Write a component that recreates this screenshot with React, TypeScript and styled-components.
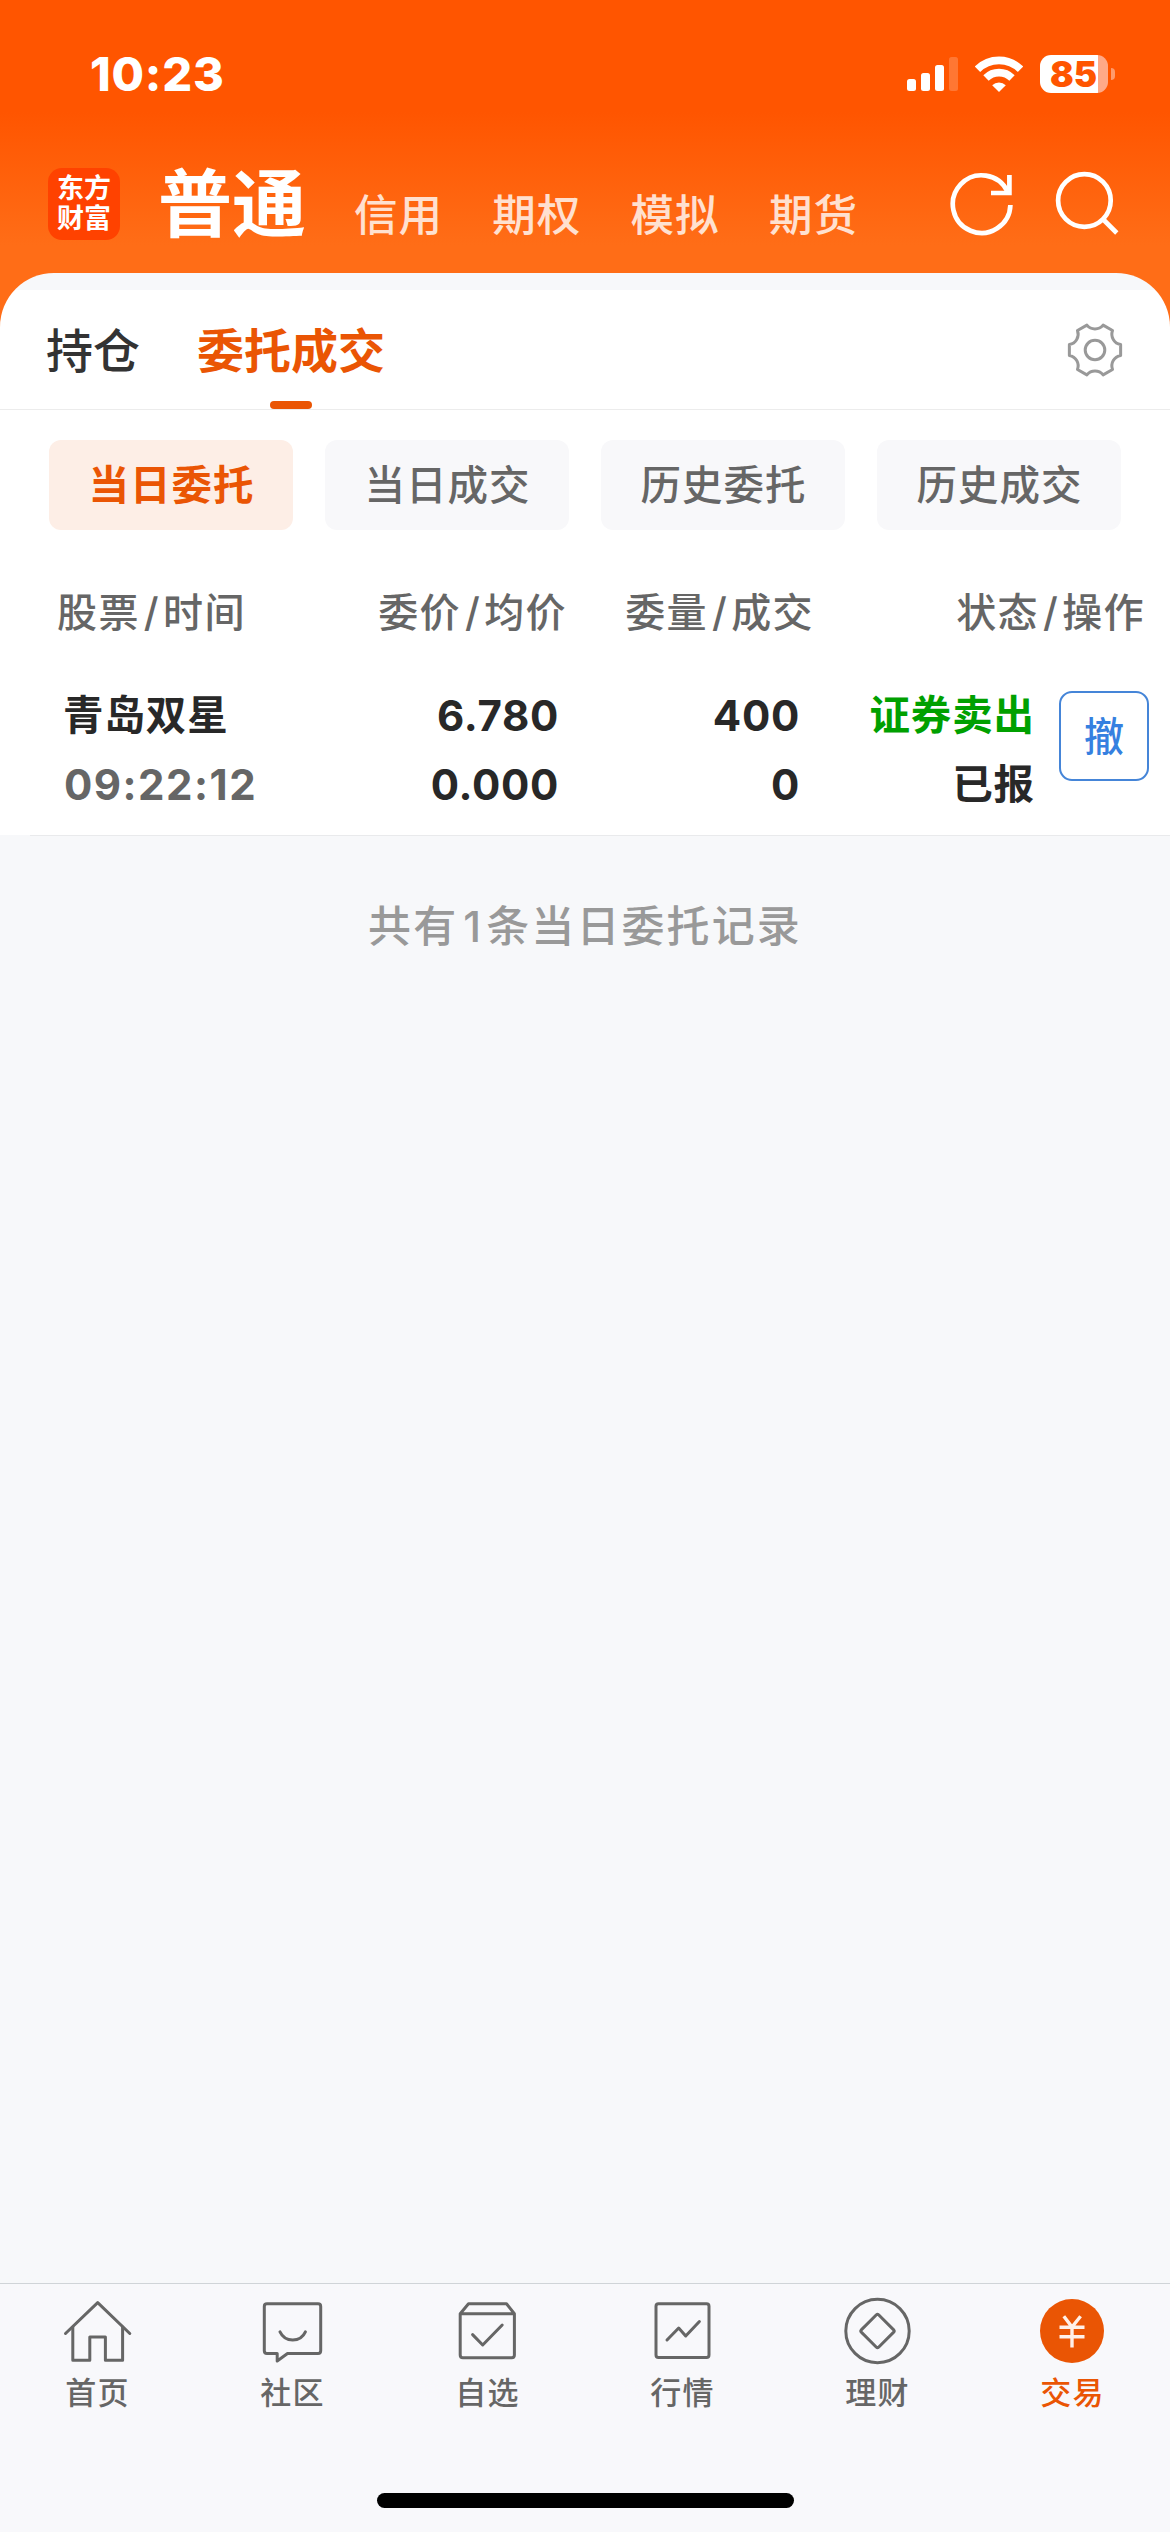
import React from "react";
import styled, { createGlobalStyle } from "styled-components";

const GlobalStyle = createGlobalStyle`
  * { box-sizing: border-box; }
  html, body { margin: 0; padding: 0; }
  body {
    width: 1170px;
    background: #f7f8fa;
    font-family: Inter, "Noto Sans CJK SC", sans-serif;
    -webkit-font-smoothing: antialiased;
  }
  button { font-family: inherit; border: 0; background: none; padding: 0; }
`;

const Screen = styled.div`
  width: 1170px;
  height: 2532px;
  display: flex;
  flex-direction: column;
  overflow: hidden;
  background: #f7f8fa;
`;

/* ---------- header ---------- */

const Header = styled.header`
  flex: none;
  height: 273px;
  background: linear-gradient(180deg, #ff5500 0, #ff5500 112px, #ff6d17 245px, #ff6d17 100%);
`;

const StatusBar = styled.div`
  height: 148px;
  padding: 0 55px 0 90px;
  display: flex;
  justify-content: space-between;
`;

const Clock = styled.span`
  margin-top: 46px;
  line-height: 56px;
  font-size: 47px;
  font-weight: 800;
  letter-spacing: 0.8px;
  color: #fff;
`;

const StatusIcons = styled.div`
  height: 38px;
  margin-top: 55px;
  display: flex;
  align-items: center;
  & > :nth-child(2) { margin-left: 17px; }
`;

const Battery = styled.div`
  width: 68px;
  height: 38px;
  margin-left: 17px;
  border-radius: 11px;
  background: linear-gradient(90deg, #fff 58px, #ffa987 58px);
  color: #ff5500;
  font-size: 35px;
  font-weight: 900;
  line-height: 38px;
  text-indent: 10px;
`;

const BatteryCap = styled.div`
  width: 4px;
  height: 12px;
  margin-left: 3px;
  border-radius: 0 4px 4px 0;
  background: #ff9a6b;
`;

const AccountBar = styled.div`
  height: 125px;
  padding: 0 51px 0 48px;
  display: flex;
`;

const Logo = styled.div`
  width: 72px;
  height: 72px;
  margin-top: 20px;
  padding-top: 6px;
  border-radius: 14px;
  background: #ff4200;
  color: #fff;
  font-size: 27px;
  font-weight: 700;
  line-height: 30px;
  text-align: center;
`;

const AccountTabs = styled.nav`
  flex: 1;
  display: flex;
  align-items: baseline;
  height: 112px;
  padding-left: 38px;
`;

const AccountTab = styled.button<{ $active?: boolean }>`
  width: ${(p) => (p.$active ? "196px" : "138.3px")};
  text-align: left;
  color: #fff;
  opacity: ${(p) => (p.$active ? 1 : 0.8)};
  font-size: ${(p) => (p.$active ? "74px" : "43.5px")};
  font-weight: ${(p) => (p.$active ? 700 : 500)};
  letter-spacing: ${(p) => (p.$active ? "0" : "1px")};
  line-height: 112px;
  white-space: nowrap;
`;

const HeaderActions = styled.div`
  display: flex;
  gap: 38px;
  margin-top: 20px;
`;

/* ---------- card ---------- */

const CardBackdrop = styled.div`
  flex: none;
  background: linear-gradient(180deg, #ff6d17 90px, #fff 90px);
`;

const Card = styled.section`
  border-radius: 54px 54px 0 0;
  background: linear-gradient(180deg, #f7f8fa 17px, #fff 17px);
  padding-top: 17px;
`;

const PageTabs = styled.div`
  height: 120px;
  padding: 0 47px 0 46px;
  border-bottom: 1px solid #ececec;
  display: flex;
`;

const PageTab = styled.button<{ $active?: boolean }>`
  height: 119px;
  margin-right: 57px;
  display: flex;
  flex-direction: column;
  align-items: center;
  justify-content: space-between;
  color: ${(p) => (p.$active ? "#ea5504" : "#333")};
  font-size: 47px;
  font-weight: ${(p) => (p.$active ? 700 : 500)};
  line-height: 60px;
  padding-top: 31px;
  &::after {
    content: "";
    width: 42px;
    height: 8px;
    border-radius: 4px;
    background: ${(p) => (p.$active ? "#ea5504" : "transparent")};
  }
`;

const SettingsButton = styled.button`
  margin: 32px 0 0 auto;
  width: 56px;
  height: 56px;
`;

const Filters = styled.div`
  height: 120px;
  padding: 30px 49px 0 49px;
  display: flex;
  justify-content: space-between;
`;

const Filter = styled.button<{ $active?: boolean }>`
  width: 244px;
  height: 90px;
  padding: 1px 0 0 1px;
  border-radius: 12px;
  background: ${(p) => (p.$active ? "#fdeee6" : "#f8f8fa")};
  color: ${(p) => (p.$active ? "#ea5504" : "#666")};
  font-size: 40.5px;
  font-weight: ${(p) => (p.$active ? 700 : 500)};
  letter-spacing: 1px;
  line-height: 90px;
`;

const TableHead = styled.div`
  height: 143px;
  padding: 53px 25px 0 57px;
  display: grid;
  grid-template-columns: 200px 310px 247px 331px;
  color: #666;
  font-size: 40px;
  font-weight: 500;
  letter-spacing: 1.4px;
  line-height: 60px;
  text-align: right;
  & > :first-child { text-align: left; }
`;

const Slash = styled.span`
  margin: 0 3px 0 4px;
`;

const OrderRow = styled.div`
  height: 162px;
  padding: 13px 21px 0 63px;
  display: grid;
  grid-template-columns: 200px 296px 241px 235px 1fr;
  color: #282828;
  font-weight: 700;
`;

const Cell = styled.div<{ $left?: boolean }>`
  display: flex;
  flex-direction: column;
  align-items: ${(p) => (p.$left ? "flex-start" : "flex-end")};
`;

const Line = styled.span<{ $tone?: string; $number?: boolean }>`
  height: 69px;
  line-height: 60px;
  font-size: ${(p) => (p.$number ? "42px" : "40.5px")};
  font-weight: ${(p) => (p.$number ? 750 : 700)};
  letter-spacing: ${(p) => (p.$number ? "0.7px" : "0.9px")};
  color: ${(p) => p.$tone ?? "inherit"};
  white-space: nowrap;
`;

const TimeLine = styled(Line)`
  padding-left: 1px;
  letter-spacing: 1.5px;
`;

const CancelButton = styled.button`
  justify-self: end;
  width: 90px;
  height: 90px;
  margin-top: 5px;
  border: 2px solid #4585d8;
  border-radius: 13px;
  color: #3580e0;
  font-size: 40px;
  font-weight: 500;
  line-height: 85px;
`;

const RowDivider = styled.div`
  height: 1px;
  margin-left: 30px;
  background: #e9eaec;
`;

const Summary = styled.p`
  flex: 1;
  margin: 0;
  padding-top: 60px;
  text-align: center;
  color: #999;
  font-size: 43px;
  font-weight: 500;
  letter-spacing: 2.1px;
  line-height: 60px;
`;

const SummaryCount = styled.span`
  margin: 0 3px 0 5px;
`;

/* ---------- bottom navigation ---------- */

const BottomNav = styled.nav`
  flex: none;
  height: 249px;
  border-top: 1px solid #d0d4d8;
  background: #f8f8fb;
  display: flex;
  flex-direction: column;
  align-items: center;
`;

const NavItems = styled.div`
  width: 1170px;
  height: 209px;
  display: grid;
  grid-template-columns: repeat(6, 195px);
`;

const NavItem = styled.button<{ $active?: boolean }>`
  display: flex;
  flex-direction: column;
  align-items: center;
  padding-top: 11px;
  color: ${(p) => (p.$active ? "#ea5504" : "#666")};
  font-size: 31px;
  font-weight: 500;
  line-height: 48px;
  letter-spacing: 1.2px;
  & > svg { margin-bottom: 2px; }
`;

const HomeIndicator = styled.div`
  width: 417px;
  height: 15px;
  border-radius: 8px;
  background: #000;
`;

/* ---------- drawings ---------- */

const SignalIcon = () => (
  <svg width="51" height="34" viewBox="0 0 51 34" fill="#fff">
    <rect x="0" y="22" width="9" height="12" rx="2.5" />
    <rect x="14" y="16" width="9" height="18" rx="2.5" />
    <rect x="28" y="8" width="9" height="26" rx="2.5" />
    <rect x="42" y="0" width="9" height="34" rx="2.5" opacity="0.2" />
  </svg>
);

const WifiIcon = () => (
  <svg width="48" height="36" viewBox="0 0 48 36" fill="none" stroke="#fff" strokeWidth="7.6">
    <path d="M2.5 13.2 A30.5 30.5 0 0 1 45.5 13.2" />
    <path d="M11 22 A18.4 18.4 0 0 1 37 22" />
    <path d="M24 36 L17.2 29.2 A9.8 9.8 0 0 1 30.8 29.2 Z" fill="#fff" stroke="none" />
  </svg>
);

const RefreshIcon = () => (
  <svg width="66" height="72" viewBox="949 168 66 72" fill="none" stroke="#fff" strokeWidth="4.7">
    <path d="M1010.4 205 A28.8 28.8 0 1 1 1007.5 191.5" />
    <path d="M1009.4 175 V193 H991" />
  </svg>
);

const SearchIcon = () => (
  <svg width="66" height="72" viewBox="1053 168 66 72" fill="none" stroke="#fff" strokeWidth="4.7">
    <circle cx="1084.4" cy="200.5" r="26.3" />
    <path d="M1103.3 219.5 L1116.8 233" />
  </svg>
);

const gearPath = (() => {
  const point = (deg: number) => {
    const a = (deg * Math.PI) / 180;
    return `${(26.2 * Math.cos(a)).toFixed(2)} ${(26.2 * Math.sin(a)).toFixed(2)}`;
  };
  let d = `M${point(-12)}`;
  for (let i = 0; i < 6; i++) {
    d += ` L${point(i * 60 + 12)} A10.5 10.5 0 0 0 ${point(i * 60 + 48)}`;
  }
  return d + " Z";
})();

const GearIcon = () => (
  <svg width="56" height="56" viewBox="-28 -28 56 56" fill="none" stroke="#999" strokeWidth="3" strokeLinejoin="round">
    <path d={gearPath} />
    <circle r="9.8" />
  </svg>
);

const NavIcon = ({ children }: { children: React.ReactNode }) => (
  <svg
    width="73"
    height="72"
    viewBox="0 0 73 72"
    fill="none"
    stroke="#666"
    strokeWidth="3"
    strokeLinecap="round"
    strokeLinejoin="round"
  >
    {children}
  </svg>
);

const navItems = [
  {
    label: "首页",
    icon: (
      <NavIcon>
        <path d="M4.5 38.5 L36.7 7.6 L68.8 38.5" />
        <path d="M11.8 32 V65.2 H28.8 V42 H44.4 V65.2 H61.6 V32" />
      </NavIcon>
    ),
  },
  {
    label: "社区",
    icon: (
      <NavIcon>
        <path d="M11 8.8 H62 Q64.7 8.8 64.7 11.5 V55.8 Q64.7 58.5 62 58.5 H31.5 L21.2 66 V58.5 H11 Q8.3 58.5 8.3 55.8 V11.5 Q8.3 8.8 11 8.8 Z" />
        <path d="M24 36.8 C29 47.6 44.5 47.6 49.4 36.8" />
      </NavIcon>
    ),
  },
  {
    label: "自选",
    icon: (
      <NavIcon>
        <path d="M9.2 18.7 L17.5 8.8 H55.5 L63.4 18.7 V60 Q63.4 62.7 60.7 62.7 H11.9 Q9.2 62.7 9.2 60 Z M9.2 18.7 H63.4" />
        <path d="M21.6 39.6 L31.7 50 L51.2 30" />
      </NavIcon>
    ),
  },
  {
    label: "行情",
    icon: (
      <NavIcon>
        <rect x="10" y="8.8" width="53" height="53.8" rx="2.5" />
        <path d="M21 45 L32.7 33 L39.7 41 L53.4 26.5" />
      </NavIcon>
    ),
  },
  {
    label: "理财",
    icon: (
      <NavIcon>
        <circle cx="36.5" cy="36" r="31.7" />
        <path d="M35.4 19.8 Q36.5 18.8 37.6 19.8 L52.7 34.9 Q53.7 36 52.7 37.1 L37.6 52.2 Q36.5 53.2 35.4 52.2 L20.3 37.1 Q19.3 36 20.3 34.9 Z" />
      </NavIcon>
    ),
  },
  {
    label: "交易",
    active: true,
    icon: (
      <NavIcon>
        <circle cx="36" cy="36" r="32" fill="#ea5504" stroke="none" />
        <path
          d="M27.8 21.2 L36 32 L44.6 21.2 M36 32 V52.5 M23.5 32.2 H48.5 M23.5 41.8 H48.5"
          stroke="#fff0e8"
          strokeWidth="3.4"
          strokeLinecap="butt"
          strokeLinejoin="miter"
        />
      </NavIcon>
    ),
  },
];

const accounts = ["普通", "信用", "期权", "模拟", "期货"];
const filters = ["当日委托", "当日成交", "历史委托", "历史成交"];
const heads = [
  ["股票", "时间"],
  ["委价", "均价"],
  ["委量", "成交"],
  ["状态", "操作"],
];

export default function App() {
  return (
    <Screen>
      <GlobalStyle />
      <Header>
        <StatusBar>
          <Clock>10:23</Clock>
          <StatusIcons>
            <SignalIcon />
            <WifiIcon />
            <Battery>85</Battery>
            <BatteryCap />
          </StatusIcons>
        </StatusBar>
        <AccountBar>
          <Logo>
            东方
            <br />
            财富
          </Logo>
          <AccountTabs>
            {accounts.map((name, i) => (
              <AccountTab key={name} $active={i === 0}>
                {name}
              </AccountTab>
            ))}
          </AccountTabs>
          <HeaderActions>
            <RefreshIcon />
            <SearchIcon />
          </HeaderActions>
        </AccountBar>
      </Header>

      <CardBackdrop>
        <Card>
          <PageTabs>
            <PageTab>持仓</PageTab>
            <PageTab $active>委托成交</PageTab>
            <SettingsButton aria-label="设置">
              <GearIcon />
            </SettingsButton>
          </PageTabs>
          <Filters>
            {filters.map((name, i) => (
              <Filter key={name} $active={i === 0}>
                {name}
              </Filter>
            ))}
          </Filters>
          <TableHead>
            {heads.map(([a, b]) => (
              <span key={a}>
                {a}
                <Slash>/</Slash>
                {b}
              </span>
            ))}
          </TableHead>
          <OrderRow>
            <Cell $left>
              <Line>青岛双星</Line>
              <TimeLine $number $tone="#666">09:22:12</TimeLine>
            </Cell>
            <Cell>
              <Line $number>6.780</Line>
              <Line $number>0.000</Line>
            </Cell>
            <Cell>
              <Line $number>400</Line>
              <Line $number>0</Line>
            </Cell>
            <Cell>
              <Line $tone="#00a000">证券卖出</Line>
              <Line>已报</Line>
            </Cell>
            <CancelButton>撤</CancelButton>
          </OrderRow>
        </Card>
      </CardBackdrop>
      <RowDivider />
      <Summary>
        共有<SummaryCount>1</SummaryCount>条当日委托记录
      </Summary>

      <BottomNav>
        <NavItems>
          {navItems.map((item) => (
            <NavItem key={item.label} $active={item.active}>
              {item.icon}
              {item.label}
            </NavItem>
          ))}
        </NavItems>
        <HomeIndicator />
      </BottomNav>
    </Screen>
  );
}
